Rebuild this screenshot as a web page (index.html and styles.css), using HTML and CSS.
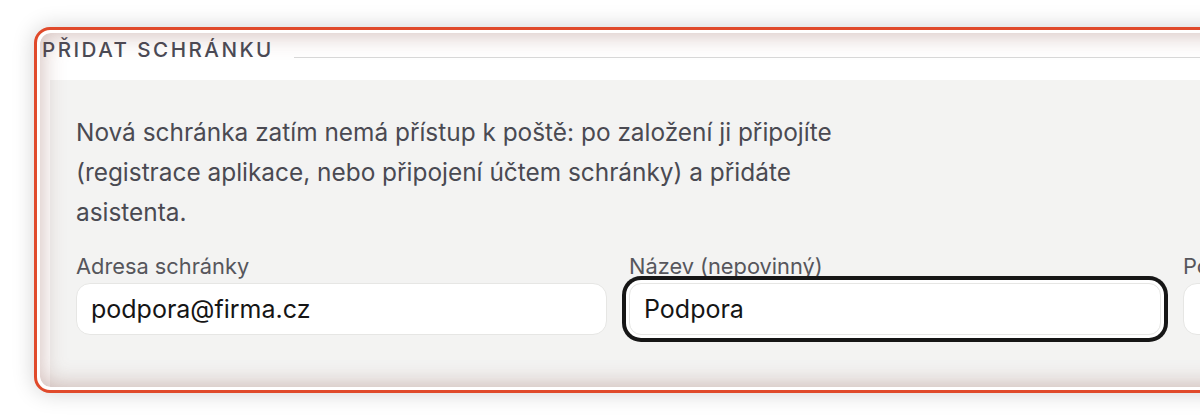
FILE: index.html
```html
<!DOCTYPE html>
<html lang="cs">
<head>
<meta charset="utf-8">
<title>Přidat schránku</title>
<link rel="stylesheet" href="styles.css">
</head>
<body>
<div class="stage">
  <section class="hl">
    <div class="hl-inner">
      <div class="legend-row">
        <h2 class="legend">PŘIDAT SCHRÁNKU</h2>
        <span class="legend-line"></span>
      </div>
      <div class="panel">
        <p class="intro">Nová schránka zatím nemá přístup k poště: po založení ji připojíte (registrace aplikace, nebo připojení účtem schránky) a přidáte asistenta.</p>
        <div class="fields">
          <label class="field">
            <span class="label">Adresa schránky</span>
            <span class="input">podpora@firma.cz</span>
          </label>
          <label class="field">
            <span class="label">Název (nepovinný)</span>
            <span class="input focus">Podpora</span>
          </label>
          <label class="field">
            <span class="label">Poskytovatel</span>
            <span class="input"></span>
          </label>
        </div>
      </div>
    </div>
  </section>
</div>
</body>
</html>
```
FILE: styles.css
```css
* { box-sizing: border-box; }
html, body {
  margin: 0;
  background: #fff;
  overflow: hidden;
  width: 1200px;
  height: 418px;
}
body {
  font-family: Inter, "Noto Sans", sans-serif;
  color: #4a4a52;
}
.stage {
  padding: 27px 0 0 34px;
}
.hl {
  width: 1700px;
  height: 366px;
  border: 3px solid #e04a2b;
  border-radius: 16px;
  padding: 3px;
  background: #fff;
  box-shadow: 0 0 22px rgba(0, 0, 0, 0.18);
}
.hl-inner {
  position: relative;
  height: 100%;
  border-radius: 11px;
  overflow: hidden;
}
.hl-inner::after {
  content: "";
  position: absolute;
  inset: 0;
  border-radius: 11px;
  box-shadow: inset 0 0 24px rgba(130, 70, 60, 0.4);
  pointer-events: none;
}
.legend-row {
  display: flex;
  align-items: flex-end;
  padding: 4.5px 0 0 2px;
}
.legend {
  margin: 0;
  font-size: 20.6px;
  font-weight: 500;
  letter-spacing: 0.12em;
  color: #4a4a55;
  line-height: 24px;
}
.legend-line {
  flex: 1;
  height: 1px;
  background: #d8d8d8;
  margin: 0 0 4px 20px;
}
.panel {
  margin: 18.5px 0 0 10px;
  background: #f3f3f2;
  padding: 32px 26px 60px;
  height: 330px;
}
.intro {
  margin: 0;
  max-width: 800px;
  font-size: 24.4px;
  line-height: 40px;
  color: #4a4a52;
}
.fields {
  display: grid;
  grid-template-columns: 531px 532px 531px;
  column-gap: 22px;
  margin-top: 20px;
}
.field {
  display: flex;
  flex-direction: column;
}
.label {
  font-size: 21.8px;
  line-height: 28px;
  color: #56565c;
}
.input {
  height: 52px;
  margin-top: 3px;
  background: #fff;
  border: 1px solid #e6e6e4;
  border-radius: 14px;
  padding: 0 14px;
  font-size: 25px;
  line-height: 50px;
  color: #151515;
}
.input.focus {
  box-shadow: 0 0 0 3px #fff, 0 0 0 7px #161616;
  border-radius: 12px;
}
```
